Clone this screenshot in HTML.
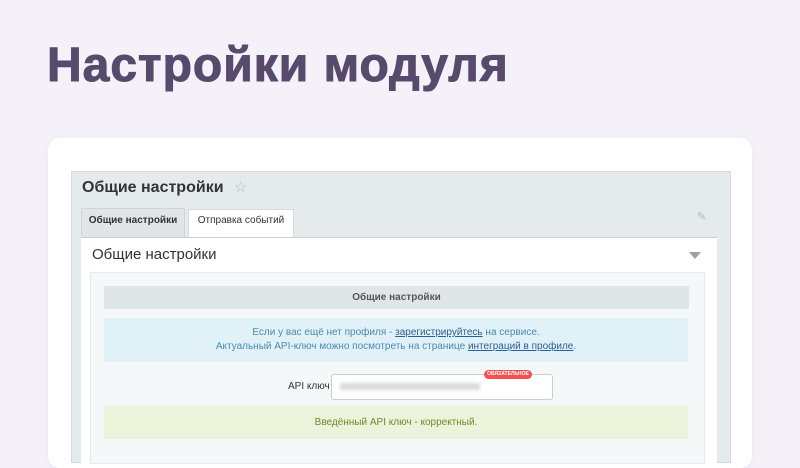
<!DOCTYPE html><html><head><meta charset="utf-8"><style>
body{margin:0;width:800px;height:450px;background:#f4f2f8;font-family:"Liberation Sans",sans-serif;position:relative;overflow:hidden}
.a{position:absolute}
</style></head><body>
<div class="a" style="left:47px;top:38px;font-size:48px;font-weight:bold;color:#574a6c;letter-spacing:1px;-webkit-text-stroke:1px #574a6c">Настройки модуля</div>
<div class="a" style="left:48px;top:138px;width:704px;height:330px;background:#fff;border-radius:12px;box-shadow:0 2px 8px rgba(0,0,0,0.05)"></div>
<div class="a" style="left:71px;top:171px;width:658px;height:290px;background:#e5ebed;border:1px solid #d6dcde"></div>
<div class="a" style="left:82px;top:178px;font-size:16px;font-weight:bold;color:#333">Общие настройки <span style="color:#b8bec2;font-weight:normal;font-size:15px;margin-left:6px">☆</span></div>
<div class="a" style="left:81px;top:208px;width:102px;height:30px;background:#e0e6e8;border:1px solid #d0d6d8;border-bottom:none;font-size:10px;font-weight:bold;color:#333;line-height:24px;text-align:center">Общие настройки</div>
<div class="a" style="left:188px;top:209px;width:104px;height:28px;background:#fff;border:1px solid #d6dcde;border-bottom:none;font-size:10px;color:#333;line-height:22px;text-align:center">Отправка событий</div>
<div class="a" style="left:697px;top:210px;color:#b0b6ba;font-size:11px">✎</div>
<div class="a" style="left:81px;top:237px;width:636px;height:230px;background:#fff;border-top:1px solid #c9d0d3"></div>
<div class="a" style="left:92px;top:246px;font-size:15px;color:#333">Общие настройки</div>
<div class="a" style="left:689px;top:252px;width:0;height:0;border-left:6px solid transparent;border-right:6px solid transparent;border-top:7px solid #9aa2a6"></div>
<div class="a" style="left:90px;top:272px;width:613px;height:190px;background:#f5f8f9;border:1px solid #e6ecee"></div>
<div class="a" style="left:104px;top:286px;width:585px;height:23px;background:#e0e6e8;font-size:10px;font-weight:bold;color:#555;text-align:center;line-height:23px">Общие настройки</div>
<div class="a" style="left:104px;top:318px;width:584px;height:44px;background:#e1f1f8;font-size:10px;color:#4a8ab0;text-align:center;line-height:14px;padding-top:8px;box-sizing:border-box">Если у вас ещё нет профиля - <u style="color:#2a5f90">зарегистрируйтесь</u> на сервисе.<br>Актуальный API-ключ можно посмотреть на странице <u style="color:#2a5f90">интеграций в профиле</u>.</div>
<div class="a" style="left:288px;top:381px;font-size:10px;color:#333">API ключ</div>
<div class="a" style="left:331px;top:374px;width:222px;height:26px;background:#fff;border:1px solid #c8cfd2;border-radius:3px;box-sizing:border-box"></div>
<div class="a" style="left:340px;top:383px;width:140px;height:7px;background:#d8dadc;filter:blur(1.5px)"></div>
<div class="a" style="left:484px;top:370px;width:48px;height:9px;background:#ef5350;border-radius:5px;color:#fff;font-size:5px;font-weight:bold;text-align:center;line-height:9px">ОБЯЗАТЕЛЬНОЕ</div>
<div class="a" style="left:104px;top:406px;width:584px;height:33px;background:#ebf4da;font-size:10px;color:#6c8a2a;text-align:center;line-height:33px">Введённый API ключ - корректный.</div>
</body></html>
